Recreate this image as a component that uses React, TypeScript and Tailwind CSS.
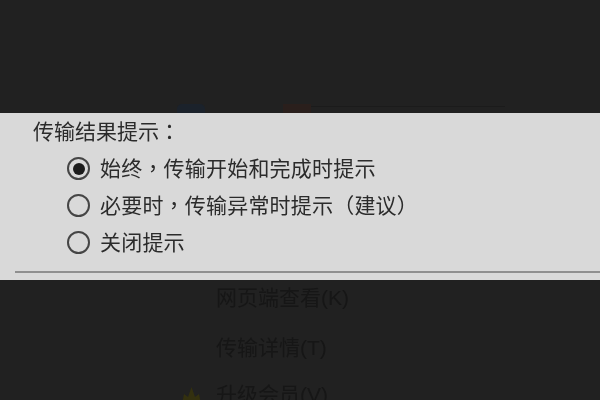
const cjk = { fontFamily: '"Liberation Sans", "Noto Sans CJK TC", sans-serif' };

function Radio({ checked }: { checked?: boolean }) {
  return (
    <span className="w-[23px] h-[23px] rounded-full border-2 border-[#454545] flex items-center justify-center shrink-0">
      {checked && <span className="w-[12px] h-[12px] rounded-full bg-[#1c1c1c]" />}
    </span>
  );
}

function Option({ checked, label }: { checked?: boolean; label: string }) {
  return (
    <div className="h-[37px] flex items-center gap-[10px]">
      <Radio checked={checked} />
      <span className="text-[21px] leading-[37px] tracking-[0.2px] text-[#2b2b2b] whitespace-pre">{label}</span>
    </div>
  );
}

function BackRow({ label, className }: { label: string; className: string }) {
  return (
    <div className={`flex items-center text-[21px] pl-[216px] whitespace-pre text-[#161616] ${className}`}>
      {label}
    </div>
  );
}

export default function App() {
  return (
    <div className="w-[600px] h-[400px] overflow-hidden bg-[#212121] flex flex-col blur-[0.4px]" style={cjk}>
      <div className="h-[113px] shrink-0 flex flex-col justify-end">
        <div className="h-[9px] ml-[177px] flex items-start">
          <span className="w-[28px] h-[9px] rounded-t-[5px] bg-[#1b222b]" />
          <span className="ml-[78px] w-[28px] h-[9px] bg-[#2a1f1c]" />
          <span className="w-[194px] h-px mt-[2px] bg-[#1b1b1b]" />
        </div>
      </div>
      <section className="h-[167px] shrink-0 bg-[#d9d9d9] flex flex-col">
        <div className="h-[37px] pl-[33px] flex items-center text-[21px] text-[#2b2b2b] whitespace-pre">传输结果提示：</div>
        <div className="pl-[67px] flex flex-col">
          <Option checked label="始终，传输开始和完成时提示" />
          <Option label="必要时，传输异常时提示（建议）" />
          <Option label="关闭提示" />
        </div>
        <div className="ml-[15px] mt-[10px] h-[2px] bg-[#8f8f8f]" />
      </section>
      <div>
        <BackRow label="网页端查看(K)" className="h-[36px]" />
        <BackRow label="传输详情(T)" className="h-[49px] mt-[7px]" />
        <div className="h-[46px] flex items-center pl-[180px] gap-[13px] text-[21px] text-[#161616] whitespace-pre">
          <svg width="23" height="20" viewBox="0 0 23 20"><path d="M2 19 L4 9 L8 12 L11.5 2 L15 12 L19 9 L21 19 Z" fill="#33300f" /></svg>
          升级会员(V)
        </div>
      </div>
    </div>
  );
}
